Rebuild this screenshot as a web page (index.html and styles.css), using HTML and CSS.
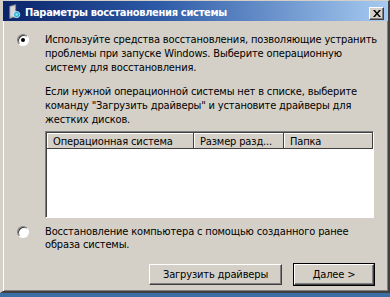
FILE: index.html
```html
<!DOCTYPE html>
<html lang="ru">
<head>
	<meta charset="UTF-8">
	<title>Параметры восстановления системы</title>
	<link rel="stylesheet" href="styles.css">
</head>
<body>
	<div class="window">
		<div class="titlebar">
			<svg class="app-icon" viewBox="0 0 16 16" width="14" height="15">
				<path d="M3 2 L10 0 L10 14 L3 16 Z" fill="#b8b8b8" stroke="#7a7a7a" stroke-width="0.6"/>
				<path d="M4 3 L9 1.6 L9 12.5 L4 14 Z" fill="#d8d8d8"/>
				<circle cx="11" cy="11.5" r="3.6" fill="#23b4d8" stroke="#ffffff" stroke-width="0.8"/>
				<circle cx="11" cy="11.5" r="1.4" fill="#9ae6f6"/>
			</svg>
			<span class="title">Параметры восстановления системы</span>
			<button class="close">
				<svg viewBox="0 0 8 7" width="8" height="7"><path d="M0 0 L2 0 L4 2.4 L6 0 L8 0 L5 3.5 L8 7 L6 7 L4 4.6 L2 7 L0 7 L3 3.5 Z" fill="#000"/></svg>
			</button>
		</div>

		<div class="content">
			<div class="option">
				<span class="radio checked"></span>
				<div class="option-body">
					<p>Используйте средства восстановления, позволяющие устранить проблемы при запуске Windows. Выберите операционную систему для восстановления.</p>
					<p class="note">Если нужной операционной системы нет в списке, выберите команду "Загрузить драйверы" и установите драйверы для жестких дисков.</p>

					<div class="list">
						<div class="list-head">
							<div class="col col-os">Операционная система</div>
							<div class="col col-size">Размер разд...</div>
							<div class="col col-dir">Папка</div>
						</div>
						<div class="list-rows"></div>
					</div>
				</div>
			</div>

			<div class="option second">
				<span class="radio"></span>
				<div class="option-body">
					<p>Восстановление компьютера с помощью созданного ранее образа системы.</p>
				</div>
			</div>

			<div class="buttons">
				<button class="btn">Загрузить драйверы</button>
				<button class="btn default">Далее &gt;</button>
			</div>
		</div>
	</div>
</body>
</html>
```
FILE: styles.css
```css
body{
	margin: 0;
	width: 390px;
	height: 297px;
	overflow: hidden;
	background: #3a6ea5;
	font-family: "DejaVu Sans", Tahoma, sans-serif;
	font-stretch: condensed;
	font-size: 11px;
	letter-spacing: -0.15px;
	color: #000;
}

.window{
	height: 293px;
	background: #d4d0c8;
	border-top: 1px solid #d4d0c8;
	border-left: 3px solid #d4d0c8;
	border-right: 2px solid #404040;
	border-bottom: 2px solid #404040;
	box-shadow: inset 1px 0 0 #ffffff, inset -1px -1px 0 #808080;
	box-sizing: border-box;
	display: flex;
	flex-direction: column;
}

.titlebar{
	height: 20px;
	background: linear-gradient(to right, #0a246a 0%, #2d5aa6 40%, #a6caf0 100%);
	display: flex;
	align-items: center;
	padding: 0 4px 0 4px;
	color: #fff;
}

.app-icon{
	margin: 1px 4px 0 0;
	flex: none;
}

.title{
	font-weight: bold;
	font-size: 11px;
	letter-spacing: -0.3px;
	flex: 1;
	padding-top: 3px;
	white-space: nowrap;
}

.close{
	width: 15px;
	height: 13px;
	margin-top: 5px;
	padding: 0;
	background: #d4d0c8;
	border: 1px solid;
	border-color: #ffffff #404040 #404040 #ffffff;
	box-shadow: inset -1px -1px 0 #808080;
	display: flex;
	align-items: center;
	justify-content: center;
}

.content{
	flex: 1;
	padding: 12px 8px 0 14px;
	display: flex;
	flex-direction: column;
}

.option{
	display: flex;
	align-items: flex-start;
}

.option p{
	margin: 0;
	line-height: 14px;
}

.option .note{
	margin-top: 10px;
}

.option-body{
	flex: 1;
	margin-left: 16px;
}

.radio{
	width: 12px;
	height: 12px;
	margin-top: 1px;
	border-radius: 50%;
	box-sizing: border-box;
	background: #fff;
	border: 1px solid;
	border-color: #808080 #ffffff #ffffff #808080;
	box-shadow: inset 1px 1px 0 #404040;
	position: relative;
	flex: none;
}

.radio.checked::after{
	content: "";
	position: absolute;
	left: 3px;
	top: 3px;
	width: 4px;
	height: 4px;
	border-radius: 50%;
	background: #000;
}

.list{
	margin: 4px 7px 0 0;
	height: 87px;
	background: #fff;
	border: 1px solid;
	border-color: #808080 #ffffff #ffffff #808080;
	box-shadow: inset 1px 1px 0 #404040;
	display: flex;
	flex-direction: column;
	padding: 1px 0 0 1px;
	box-sizing: border-box;
}

.list-head{
	display: flex;
	height: 16px;
}

.col{
	background: #d4d0c8;
	border-right: 1px solid #404040;
	border-bottom: 1px solid #404040;
	box-shadow: inset 1px 1px 0 #ffffff;
	padding: 2px 0 0 6px;
	box-sizing: border-box;
	white-space: nowrap;
	overflow: hidden;
}

.col-os{
	width: 147px;
}

.col-size{
	width: 90px;
}

.col-dir{
	width: 89px;
}

.list-rows{
	flex: 1;
}

.second{
	margin-top: 7px;
}

.second p{
	line-height: 13px;
}

.second .radio{
	margin-top: 1px;
}

.buttons{
	display: flex;
	justify-content: flex-end;
	gap: 12px;
	margin: 13px 6px 0 0;
}

.btn{
	font-family: inherit;
	font-stretch: condensed;
	font-size: 11px;
	letter-spacing: -0.15px;
	height: 21px;
	background: #d4d0c8;
	border: 1px solid;
	border-color: #ffffff #404040 #404040 #ffffff;
	box-shadow: inset -1px -1px 0 #808080;
	padding: 0;
	width: 133px;
	color: #000;
}

.btn.default{
	width: 80px;
	outline: 1px solid #000;
}
```
